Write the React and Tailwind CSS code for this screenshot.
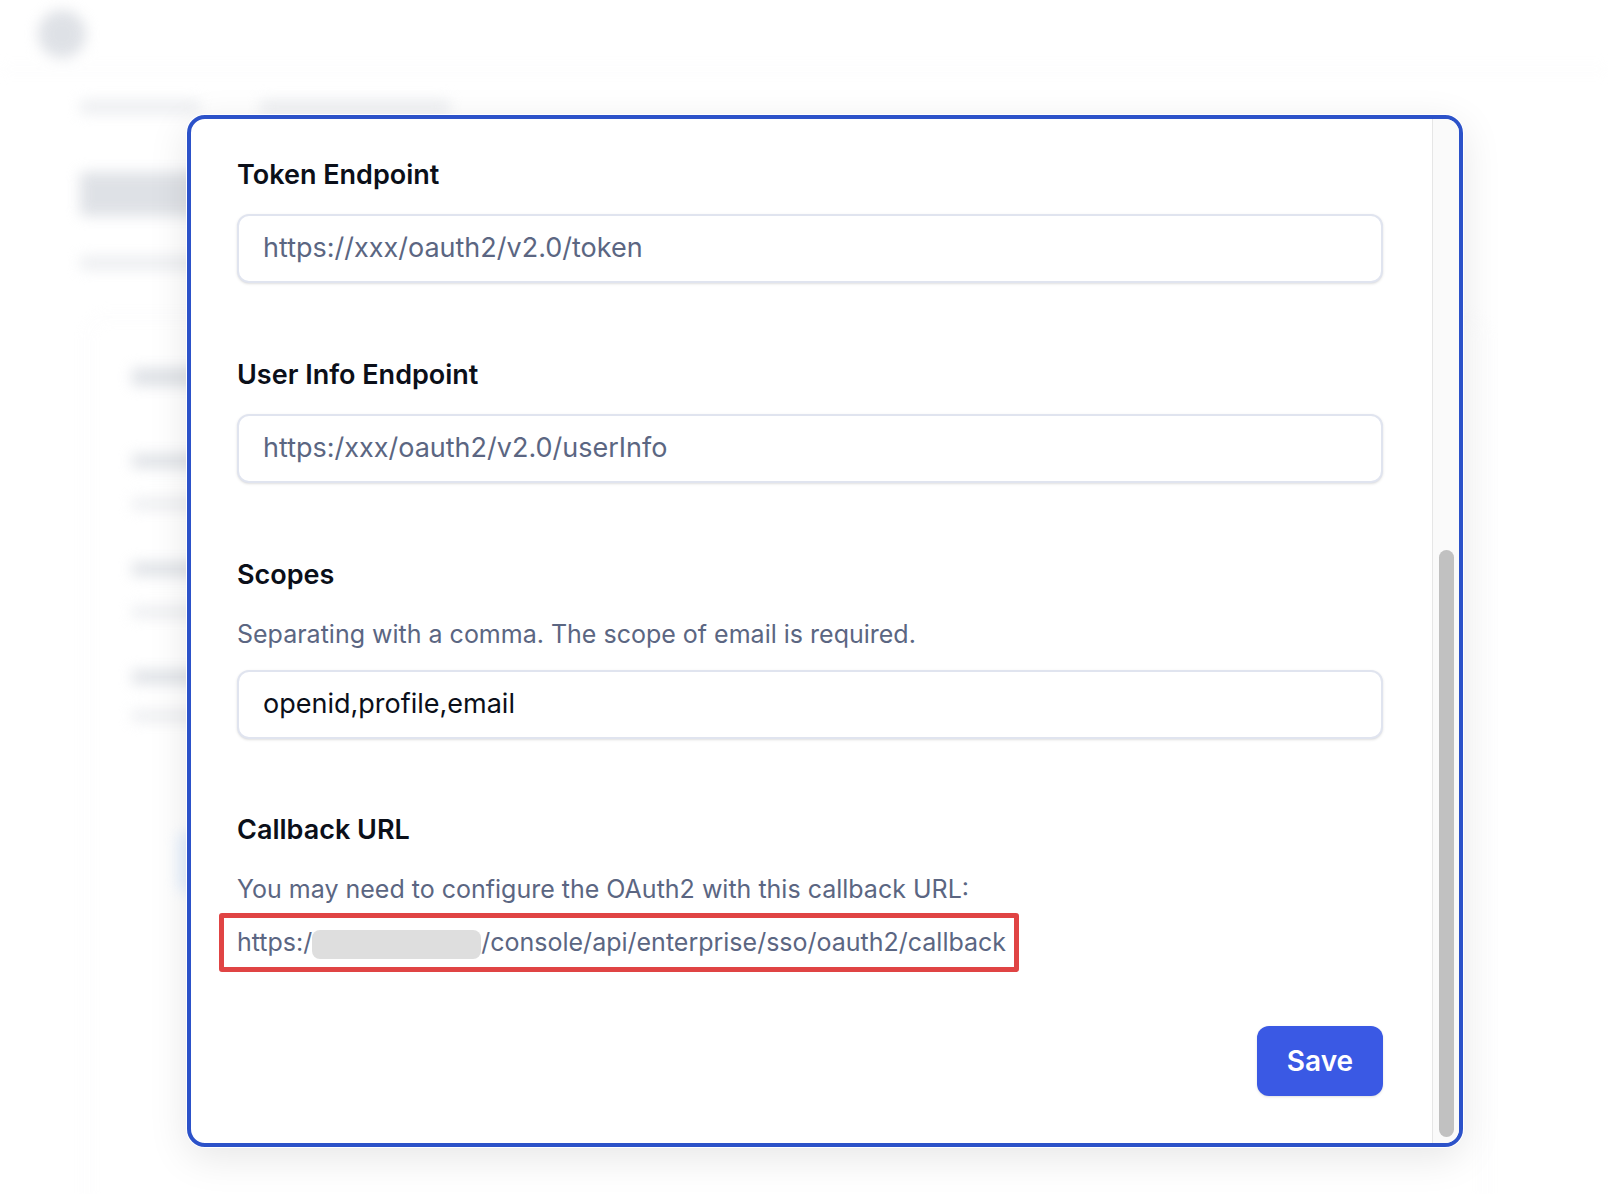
import React from 'react';

const fields = [
    { label: 'Token Endpoint', value: 'https://xxx/oauth2/v2.0/token', placeholder: true },
    { label: 'User Info Endpoint', value: 'https:/xxx/oauth2/v2.0/userInfo', placeholder: true },
];

function Field({ label, hint, value, placeholder }) {
    return (
        <div>
            <div className="text-[27px] leading-[40px] font-semibold text-[#0b0f19]">{label}</div>
            {hint && <div className="mt-[21px] text-[25px] leading-[36px] text-[#5b6682]">{hint}</div>}
            <div className={`${hint ? 'mt-[18px]' : 'mt-[19px]'} h-[69px] rounded-[12px] border-2 border-[#e0e4ef] bg-white shadow-sm flex items-center px-[24px]`}>
                <span className={`text-[27px] ${placeholder ? 'text-[#5b6682]' : 'text-[#0b0f19]'}`}>{value}</span>
            </div>
        </div>
    );
}

function BlurredPage() {
    return (
        <div className="h-full blur-[7px] opacity-70">
            <div className="h-[70px] border-b-2 border-gray-100 flex items-center pl-[38px]">
                <div className="w-[48px] h-[48px] rounded-full bg-gray-300" />
            </div>
            <div className="pl-[80px] pt-[30px]">
                <div className="flex gap-[60px]">
                    <div className="w-[120px] h-[14px] bg-gray-200 rounded" />
                    <div className="w-[190px] h-[14px] bg-gray-200 rounded" />
                </div>
                <div className="mt-[58px] w-[220px] h-[44px] bg-gray-300 rounded" />
                <div className="mt-[40px] w-[300px] h-[14px] bg-gray-200 rounded" />
                <div className="mt-[46px] ml-[6px] w-[1400px] h-[900px] rounded-[20px] border-2 border-gray-100 pl-[44px] pt-[50px]">
                    <div className="w-[200px] h-[18px] bg-gray-300 rounded" />
                    <div className="mt-[68px] w-[200px] h-[14px] bg-gray-300 rounded" />
                    <div className="mt-[30px] w-[200px] h-[12px] bg-gray-200 rounded" />
                    <div className="mt-[52px] w-[200px] h-[14px] bg-gray-300 rounded" />
                    <div className="mt-[30px] w-[200px] h-[12px] bg-gray-200 rounded" />
                    <div className="mt-[52px] w-[200px] h-[14px] bg-gray-300 rounded" />
                    <div className="mt-[26px] w-[200px] h-[12px] bg-gray-200 rounded" />
                    <div className="mt-[110px] ml-[46px] w-[80px] h-[60px] bg-blue-100 rounded-lg" />
                </div>
            </div>
        </div>
    );
}

export default function App() {
    return (
        <div className="relative w-full h-[1194px] overflow-hidden bg-white font-['Inter',sans-serif]">
            <BlurredPage />

            <div className="absolute left-[187px] top-[115px] w-[1276px] h-[1032px] rounded-[18px] border-4 border-[#2c52c9] bg-white ring-1 ring-white shadow-[0_10px_40px_rgba(0,0,0,0.10)] flex overflow-hidden">
                <div className="flex-1 pl-[46px] pr-[49px] pt-[36px] flex flex-col">
                    {fields.map((f) => (
                        <div key={f.label} className="mb-[72px]">
                            <Field {...f} />
                        </div>
                    ))}

                    <Field
                        label="Scopes"
                        hint="Separating with a comma. The scope of email is required."
                        value="openid,profile,email"
                    />

                    <div className="mt-[71px]">
                        <div className="text-[27px] leading-[40px] font-semibold text-[#0b0f19]">Callback URL</div>
                        <div className="mt-[21px] text-[25px] leading-[36px] text-[#5b6682]">
                            You may need to configure the OAuth2 with this callback URL:
                        </div>
                        <div className="mt-[17px]">
                            <div className="relative inline-block text-[25px] leading-[36px] text-[#5b6682]">
                                <span>https:/</span>
                                <span className="inline-block align-middle w-[169px] h-[29px] rounded-[8px] bg-[#dedede]" />
                                <span>/console/api/enterprise/sso/oauth2/callback</span>
                                <div className="absolute -left-[18px] -right-[13px] -top-[11px] -bottom-[12px] border-[5px] border-[#e04444] rounded-[3px]" />
                            </div>
                        </div>
                    </div>

                    <div className="mt-[66px] flex justify-end">
                        <button className="w-[126px] h-[70px] rounded-[12px] bg-[#3a59e4] text-white text-[28px] font-semibold shadow-sm">
                            Save
                        </button>
                    </div>
                </div>

                <div className="w-[27px] bg-[#fafafa] border-l border-[#e6e6e6] flex flex-col">
                    <div className="h-[431px]" />
                    <div className="mx-auto w-[15px] h-[587px] rounded-full bg-[#c1c1c1]" />
                </div>
            </div>
        </div>
    );
}
